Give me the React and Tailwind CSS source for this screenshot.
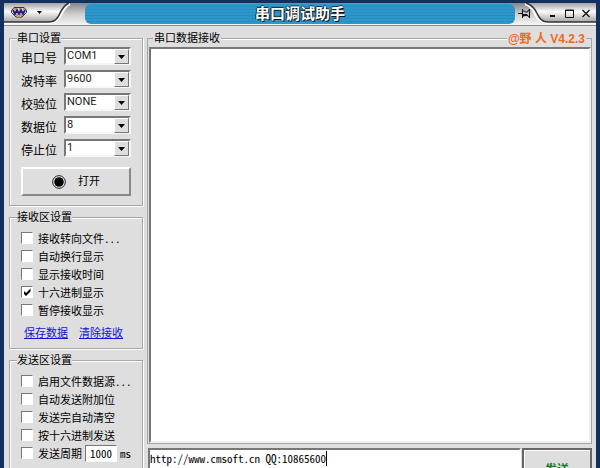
import React, { useState } from "react";

const ports = [
  { id: "port", label: "串口号", options: ["COM1", "COM2", "COM3"] },
  { id: "baud", label: "波特率", options: ["9600", "19200", "115200"] },
  { id: "parity", label: "校验位", options: ["NONE", "ODD", "EVEN"] },
  { id: "data", label: "数据位", options: ["8", "7", "6"] },
  { id: "stop", label: "停止位", options: ["1", "1.5", "2"] },
];

const receiveOptions = [
  { id: "toFile", label: "接收转向文件..." },
  { id: "wrap", label: "自动换行显示" },
  { id: "time", label: "显示接收时间" },
  { id: "hex", label: "十六进制显示", checked: true },
  { id: "pause", label: "暂停接收显示" },
];

const sendOptions = [
  { id: "fromFile", label: "启用文件数据源..." },
  { id: "suffix", label: "自动发送附加位" },
  { id: "clear", label: "发送完自动清空" },
  { id: "sendHex", label: "按十六进制发送" },
];

const Group = ({ title, className, children }) => (
  <fieldset
    className={`min-w-0 border border-[#a6a6a6] px-[11px] shadow-[1px_1px_0_#fff,inset_1px_1px_0_#fff] ${className}`}
  >
    <legend className="-ml-1 bg-[#dedede] text-[11px] leading-3">{title}</legend>
    {children}
  </fieldset>
);

const Select = ({ id, options }) => (
  <div className="relative w-[67px]">
    <select
      id={id}
      className="block h-[18px] w-full appearance-none border-2 border-t-[#777] border-l-[#777] border-r-[#f6f6f6] border-b-[#f6f6f6] bg-white pl-px font-[Roboto,'Liberation_Sans',sans-serif] text-[11px] leading-3 text-[#222] outline-none"
    >
      {options.map((o) => (
        <option key={o}>{o}</option>
      ))}
    </select>
    <span className="pointer-events-none absolute top-0.5 right-0.5 flex h-[15px] w-[15px] items-center justify-center border border-t-white border-l-white border-r-[#777] border-b-[#777] bg-[#dedede]">
      <svg width="7" height="4" viewBox="0 0 7 4">
        <path d="M0 0h7L3.5 4z" fill="#000" />
      </svg>
    </span>
  </div>
);

const CheckBox = ({ id, label, checked }) => (
  <div className="flex h-[18px] items-center gap-[5px]">
    <span className="relative h-3 w-3">
      <input
        id={id}
        type="checkbox"
        defaultChecked={checked}
        className="peer block h-3 w-3 appearance-none border border-t-[#777] border-l-[#777] border-r-white border-b-white bg-white"
      />
      <svg
        viewBox="0 0 12 12"
        className="pointer-events-none absolute inset-0 hidden h-3 w-3 peer-checked:block"
      >
        <path d="M3 5v3l2 2 4.500-4.500v-3L5 7z" fill="#000" />
      </svg>
    </span>
    <label
      htmlFor={id}
      className="font-['Noto_Sans_Mono_CJK_SC','Noto_Sans_CJK_SC',sans-serif] text-[11px] leading-3 whitespace-nowrap"
    >
      {label}
    </label>
  </div>
);

const TitleBar = () => (
  <header className="flex h-[22px] bg-linear-to-b from-[#858585] via-[#cecece] to-[#f4f4f4]">
    <div className="relative w-[81px] shrink-0">
      <svg className="absolute inset-0" width="81" height="22" viewBox="0 0 81 22">
        <defs>
          <linearGradient id="tab" x1="0" y1="0" x2="0" y2="1">
            <stop offset="0" stopColor="#a2a2a2" />
            <stop offset="0.45" stopColor="#fafafa" />
            <stop offset="1" stopColor="#a4a4a4" />
          </linearGradient>
        </defs>
        <path d="M0 0H65C58 3 57 9 54 14C51 18 49 19 44 19H0z" fill="url(#tab)" />
        <path d="M66 1C60 4 59 9 56 14C53 19 50 20 45 20H0" fill="none" stroke="#fff" strokeWidth="2" />
        <path d="M65 0C58 3 57 9 54 14C51 18 49 19 44 19H0" fill="none" stroke="#333" strokeWidth="1.400" />
      </svg>
      <button aria-label="菜单" className="relative flex items-center gap-2.5 pt-1 pl-[7px]">
        <svg width="16" height="11" viewBox="0 0 16 11">
          <path d="M3 .5h10l2.500 3v2L11 10H5L.5 5.500v-2z" fill="#e8dcc0" stroke="#333" />
          <path d="M2 3l2 4 2-4 2 4 2-4 2 4 2-4" fill="none" stroke="#1c1c86" strokeWidth="1.800" />
          <path d="M3 2h3M8 2h2M12 2h1M5 8h2M9 8h2" stroke="#b63838" />
          <path d="M6 9.500h4" stroke="#d9a23a" />
        </svg>
        <svg width="5" height="3" viewBox="0 0 5 3">
          <path d="M0 0h5L2.500 3z" fill="#000" />
        </svg>
      </button>
    </div>

    <h1 className="my-px flex-1 rounded-md bg-[repeating-linear-gradient(#2b98cb_0_2px,#288cbd_2px_3px)] text-center text-[15px] leading-[19px] font-bold text-white [text-shadow:1px_1px_0_#111,-1px_0_0_#234,0_-1px_0_#234]">
      串口调试助手
    </h1>

    <div className="relative w-[81px] shrink-0">
      <svg className="absolute inset-0" width="81" height="22" viewBox="0 0 81 22">
        <path d="M11 0C20 3 21 9 24 14C27 18 29 19 34 19H81V0z" fill="url(#tab)" />
        <path d="M10 1C18 4 19 10 22 15C25 19 28 20 34 20H81" fill="none" stroke="#fff" strokeWidth="2" />
        <path d="M11 0C20 3 21 9 24 14C27 18 29 19 34 19H81" fill="none" stroke="#333" strokeWidth="1.400" />
      </svg>
      <div className="relative flex items-center pt-[5px] pl-[3px]">
        <button aria-label="置顶">
          <svg width="12" height="11" viewBox="0 0 12 11" fill="none" stroke="#111">
            <path d="M0 5.500h4M4.500 1v9M4.500 3h2l1 1h2l1-2h1M4.500 8h2l1-1h2l1 2h1M11.500 1v9M5 7.500h5M5 6.500h4" />
          </svg>
        </button>
        <div className="flex gap-2 pl-[19px]">
          <button aria-label="最小化">
            <svg width="8" height="9" viewBox="0 0 8 9">
              <path d="M1 6h5v2H1z" fill="#111" />
            </svg>
          </button>
          <button aria-label="最大化">
            <svg width="9" height="9" viewBox="0 0 9 9">
              <path d="M.5 1h8v7.500h-8zM0 1.500h9" fill="none" stroke="#111" />
            </svg>
          </button>
          <button aria-label="关闭">
            <svg width="8" height="9" viewBox="0 0 8 9">
              <path d="M.5 1l7 7M7.500 1l-7 7" stroke="#111" strokeWidth="1.300" />
            </svg>
          </button>
        </div>
      </div>
    </div>
  </header>
);

const App = () => {
  const [message, setMessage] = useState("http://www.cmsoft.cn QQ:10865600");

  return (
    <div className="flex h-screen flex-col overflow-hidden border-x-4 border-t-[3px] border-[#12305f] bg-[#dedede] font-['Liberation_Sans','Noto_Sans_CJK_SC',sans-serif] text-black">
      <TitleBar />

      <main className="flex min-h-0 flex-1 gap-1 border-t border-[#8c8c8c] pt-1.5 pr-1 pl-[5px]">
        <div className="flex w-[134px] shrink-0 flex-col gap-[5px]">
          <Group title="串口设置" className="pt-[3px] pb-[9px]">
            <div className="flex flex-col gap-[5px]">
              {ports.map((p) => (
                <div key={p.id} className="flex items-end justify-between">
                  <label htmlFor={p.id} className="text-xs leading-3">
                    {p.label}
                  </label>
                  <Select id={p.id} options={p.options} />
                </div>
              ))}
            </div>
            <button className="mt-2.5 flex h-[29px] w-full items-center justify-center gap-3 border-2 border-t-white border-l-white border-r-[#888] border-b-[#888] text-[11px]">
              <svg width="14" height="14" viewBox="0 0 14 14">
                <circle cx="7" cy="7" r="6.300" fill="#fff" stroke="#111" />
                <circle cx="7" cy="7" r="4.800" fill="#000" />
              </svg>
              打开
            </button>
          </Group>

          <Group title="接收区设置" className="pt-1.5 pb-[7px]">
            {receiveOptions.map((o) => (
              <CheckBox key={o.id} {...o} />
            ))}
            <div className="mt-1.5 flex gap-[11px] pl-[3px] text-[11px] leading-4 text-[#1414d8] underline">
              <a href="#save">保存数据</a>
              <a href="#clear">清除接收</a>
            </div>
          </Group>

          <Group title="发送区设置" className="pt-1.5 pb-4">
            {sendOptions.map((o) => (
              <CheckBox key={o.id} {...o} />
            ))}
            <div className="flex items-center gap-[3px]">
              <CheckBox id="cycle" label="发送周期" />
              <input
                aria-label="周期"
                defaultValue="1000"
                className="h-[17px] w-8 border border-t-[#777] border-l-[#777] border-r-white border-b-white bg-white text-center font-['Noto_Sans_Mono_CJK_SC','Liberation_Mono',monospace] text-[11px] leading-3 outline-none"
              />
              <span className="font-['Noto_Sans_Mono_CJK_SC','Liberation_Mono',monospace] text-[11px] leading-3">
                ms
              </span>
            </div>
          </Group>
        </div>

        <div className="flex min-w-0 flex-1 flex-col gap-1">
          <section className="flex min-h-0 flex-1 flex-col">
            {/* 标题行 */}
            <div className="flex h-[15px] items-start gap-px">
              <span className="mt-1.5 h-[9px] w-1.5 border-t border-l border-[#a6a6a6]" />
              <label htmlFor="received" className="text-[11px] leading-3">
                串口数据接收
              </label>
              <span className="mt-1.5 flex-1 border-t border-b border-t-[#a6a6a6] border-b-white" />
              <span className="text-xs leading-[14px] font-bold text-[#f0691c]">@野 人 V4.2.3</span>
              <span className="mt-1.5 h-[9px] w-1.5 border-t border-r border-[#a6a6a6]" />
            </div>
            <div className="flex min-h-0 flex-1 border-r border-b border-l border-[#a6a6a6] pl-px">
              <textarea
                id="received"
                readOnly
                className="block w-full resize-none border-2 border-t-[#777] border-l-[#777] border-r-[#f0f0f0] border-b-[#f0f0f0] bg-white p-1 text-[11px] outline-none"
              />
            </div>
          </section>

          {/* 发送栏 */}
          <section className="flex h-5 gap-px overflow-hidden pl-px">
            <div className="flex h-11 min-w-0 flex-1 items-start border-2 border-[#777] border-r-white bg-white pt-px">
              <input
                aria-label="发送内容"
                value={message}
                onChange={(e) => setMessage(e.target.value)}
                className="block h-[15px] [field-sizing:content] font-['Noto_Sans_Mono_CJK_SC','Liberation_Mono',monospace] text-[11px] leading-[15px] outline-none"
              />
              <span className="h-[15px] w-px bg-black" />
            </div>
            <button className="h-11 w-[70px] border-2 border-[#666] bg-[#dedede] text-xs leading-4 font-bold text-[#0f7a22] shadow-[inset_1px_1px_0_#fff]">
              发送
            </button>
          </section>
        </div>
      </main>
    </div>
  );
};

export default App;
